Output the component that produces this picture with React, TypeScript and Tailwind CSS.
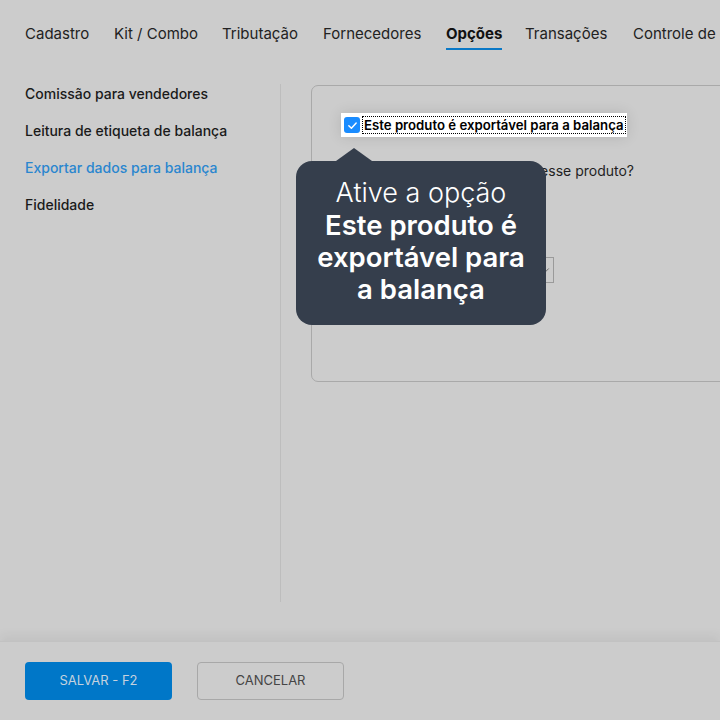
import { ChevronDown } from "lucide-react";

const tabs = [
  { label: "Cadastro", w: "w-[89px]" },
  { label: "Kit / Combo", w: "w-[108px]" },
  { label: "Tributação", w: "w-[101px]" },
  { label: "Fornecedores", w: "w-[123px]" },
  { label: "Opções", w: "w-[79px]" },
  { label: "Transações", w: "w-[108px]" },
  { label: "Controle de estoque", w: "w-[160px]" },
];
const sideItems = ["Comissão para vendedores", "Leitura de etiqueta de balança", "Exportar dados para balança", "Fidelidade"];

const App = () => {
  return (
    <div className="w-[720px] h-[720px] bg-[#cccccc] flex flex-col overflow-hidden font-['Inter',sans-serif] text-[#1c1c1c]">
      {/* tabs */}
      <nav className="h-[60px] shrink-0 flex items-start pl-[25px] whitespace-nowrap">
        {tabs.map((t) => (
          <div key={t.label} className={t.w + " shrink-0"}>
            <span
              className={
                "inline-block pt-[24px] h-[50px] text-[15px] leading-[20px] " +
                (t.label === "Opções" ? "font-bold border-b-2 border-[#0a78c6] text-[#111]" : "text-[#222]")
              }
            >
              {t.label}
            </span>
          </div>
        ))}
      </nav>

      {/* content */}
      <div className="h-[581px] shrink-0 flex items-start">
        <aside className="w-[281px] shrink-0 mt-[24px] h-[518px] border-r border-[#bdbdbd] pl-[25px] flex flex-col gap-[17px]">
          {sideItems.map((s) => (
            <div
              key={s}
              className={
                "text-[14px] leading-[20px] font-medium " +
                (s === "Exportar dados para balança" ? "text-[#2a86cf]" : "text-[#1a1a1a]")
              }
            >
              {s}
            </div>
          ))}
        </aside>

        <section className="relative ml-[30px] mt-[25px] w-[440px] h-[297px] shrink-0 border border-[#a9a9a9] rounded-[7px] pl-[29px] pt-[27px]">
          <div className="w-[286px] h-[24px] bg-white flex items-center pl-[3px] shadow-[0_0_14px_rgba(0,0,0,0.12)]">
            <span className="w-[16px] h-[16px] rounded-[3px] bg-[#1a8cff] flex items-center justify-center">
              <svg width="11" height="11" viewBox="0 0 12 12" fill="none">
                <path d="M2 6.3 4.8 9 10 3.2" stroke="white" strokeWidth="1.6" strokeLinecap="round" strokeLinejoin="round" />
              </svg>
            </span>
            <span className="ml-[2px] border border-dotted border-black px-[1px] text-[13.2px] leading-[16px] font-semibold text-black whitespace-nowrap">
              Este produto é exportável para a balança
            </span>
          </div>

          <div className="mt-[24px] text-[14px] leading-[20px] text-[#1f1f1f] whitespace-nowrap pl-[2px]">
            Qual é a unidade de medida desse produto?
          </div>

          <div className="mt-[76px] ml-[2px] w-[211px] h-[26px] border border-[#9a9a9a] flex items-center justify-end pr-[2px]">
            <ChevronDown className="w-[10px] h-[10px] text-[#555]" />
          </div>

          {/* tooltip */}
          <div className="absolute left-[-16px] top-[61px] w-[250px]">
            <svg className="ml-[40px] block" width="36" height="14" viewBox="0 0 36 14">
              <path d="M0 14 L18 1 L36 14 Z" fill="#353e4c" />
            </svg>
            <div className="h-[164px] rounded-[16px] bg-[#353e4c] text-white text-center flex flex-col justify-center pb-[5px] text-[27px] leading-[32px]">
              <div className="font-light">Ative a opção</div>
              <div className="font-semibold text-[27.5px]">
                Este produto é
                <br />
                exportável para
                <br />a balança
              </div>
            </div>
          </div>
        </section>
      </div>

      {/* footer */}
      <footer className="flex-1 border-t border-[#c2c2c2] shadow-[0_-6px_10px_rgba(0,0,0,0.05)] pl-[25px] pt-[20px] flex gap-[25px]">
        <button className="w-[147px] h-[38px] rounded-[4px] bg-[#0077c8] text-[#c5d2de] text-[13px] font-normal">
          SALVAR - F2
        </button>
        <button className="w-[147px] h-[38px] rounded-[4px] border border-[#a8a8a8] text-[#454545] text-[13px] font-normal">
          CANCELAR
        </button>
      </footer>
    </div>
  );
};

export default App;
